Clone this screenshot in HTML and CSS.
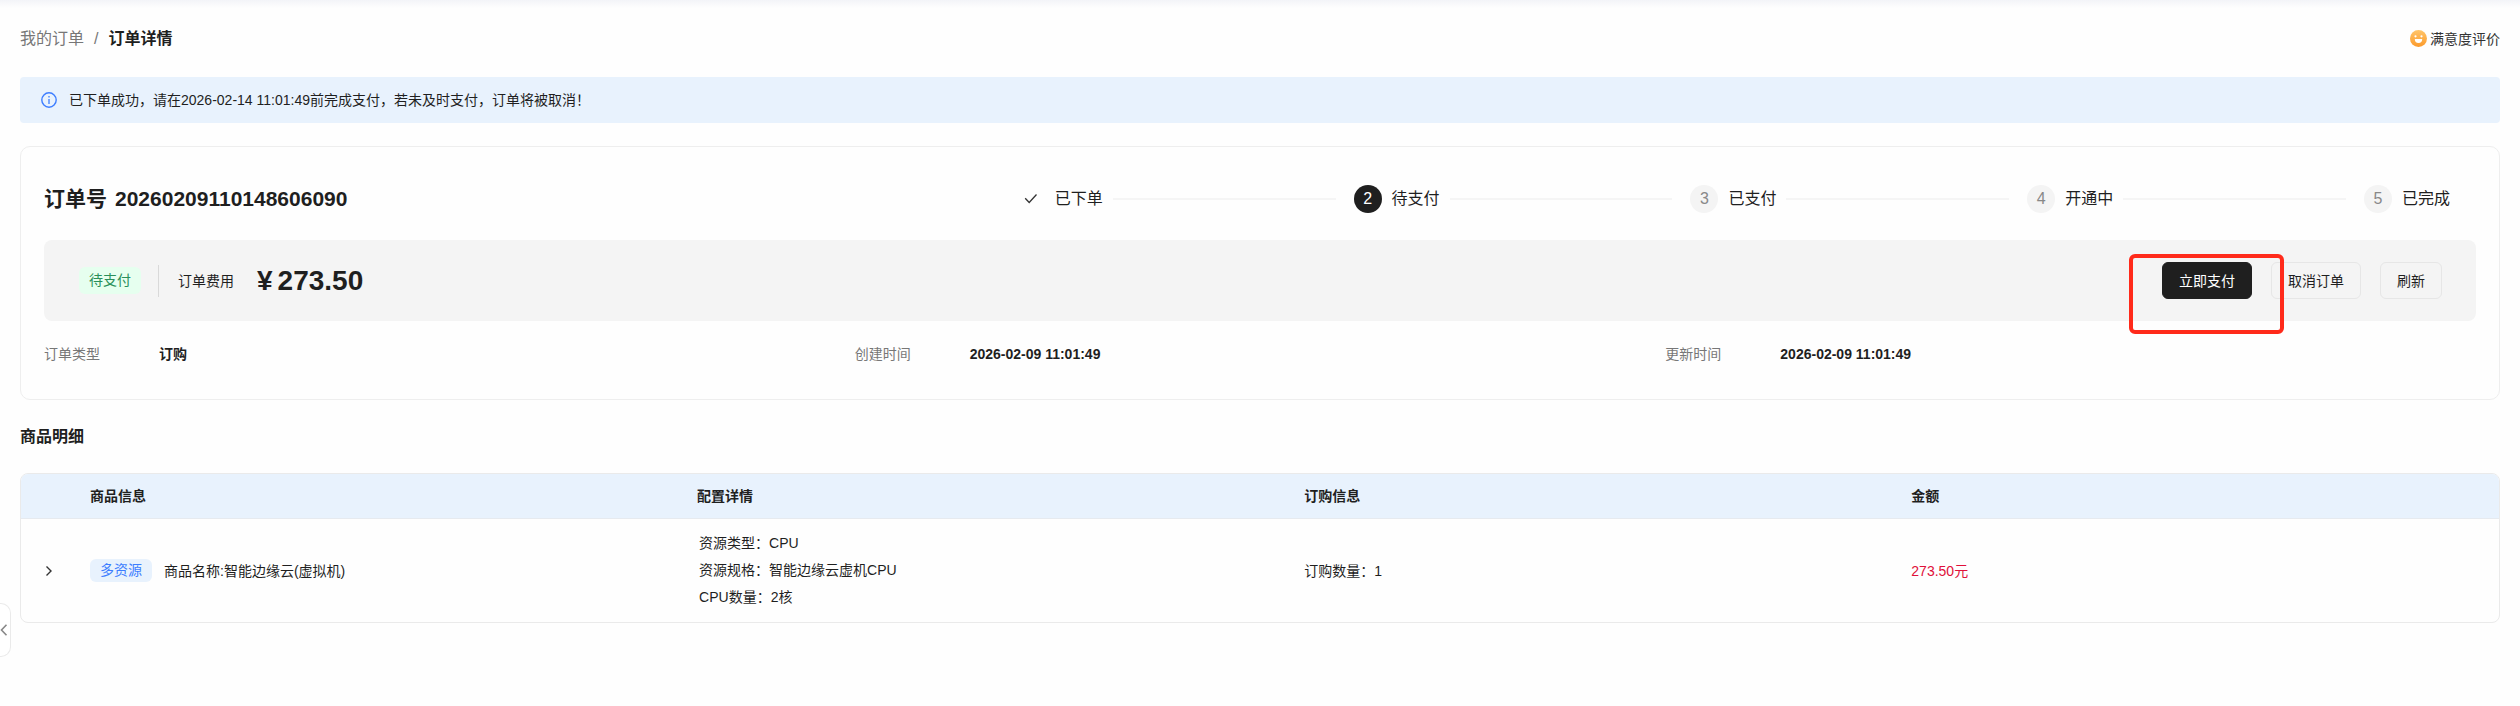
FILE: index.html
```
<!DOCTYPE html>
<html lang="zh-CN">
<head>
    <meta charset="UTF-8">
    <meta name="viewport" content="width=device-width, initial-scale=1.0">
    <title>订单详情</title>
    <link rel="stylesheet" href="styles.css">
</head>
<body>
    <header class="page-header">
        <nav class="breadcrumb">
            <a href="#">我的订单</a>
            <span class="separator">/</span>
            <span class="current">订单详情</span>
        </nav>
        <a href="#" class="feedback">
            <svg width="17" height="17" viewBox="0 0 17 17">
                <defs>
                    <linearGradient id="face" x1="0" y1="0" x2="0" y2="1">
                        <stop offset="0" stop-color="#ffc56a"/>
                        <stop offset="1" stop-color="#fc9a2b"/>
                    </linearGradient>
                </defs>
                <circle cx="8.5" cy="8.5" r="8.5" fill="url(#face)"/>
                <circle cx="5.5" cy="6.3" r="1.1" fill="#fff"/>
                <circle cx="11.5" cy="6.3" r="1.1" fill="#fff"/>
                <path d="M4.8 9h7.4a3.7 3.9 0 0 1-7.4 0z" fill="#fff"/>
            </svg>
            满意度评价
        </a>
    </header>

    <main>
        <div class="alert">
            <svg width="16" height="16" viewBox="0 0 16 16" fill="none" stroke="#3d7eff">
                <circle cx="8" cy="8" r="7.2" stroke-width="1.4"/>
                <path d="M8 7v5M8 4v1.4" stroke-width="1.3"/>
            </svg>
            <span>已下单成功，请在2026-02-14 11:01:49前完成支付，若未及时支付，订单将被取消！</span>
        </div>

        <section class="order-card">
            <div class="order-top">
                <h1>订单号<span>20260209110148606090</span></h1>
                <ol class="steps">
                    <li class="step">
                        <span class="step-icon done">
                            <svg width="14" height="12" viewBox="0 0 14 12" fill="none" stroke="#333" stroke-width="1.3">
                                <path d="M1.2 5.2l4 4.3 7.3-8"/>
                            </svg>
                        </span>
                        <span>已下单</span>
                    </li>
                    <li class="step">
                        <span class="step-icon active">2</span>
                        <span>待支付</span>
                    </li>
                    <li class="step">
                        <span class="step-icon">3</span>
                        <span>已支付</span>
                    </li>
                    <li class="step">
                        <span class="step-icon">4</span>
                        <span>开通中</span>
                    </li>
                    <li class="step">
                        <span class="step-icon">5</span>
                        <span>已完成</span>
                    </li>
                </ol>
            </div>

            <div class="pay-bar">
                <span class="status">待支付</span>
                <span class="fee-label">订单费用</span>
                <span class="fee"><span>¥</span>273.50</span>
                <div class="actions">
                    <div class="highlight">
                        <button type="button" class="primary">立即支付</button>
                    </div>
                    <button type="button">取消订单</button>
                    <button type="button">刷新</button>
                </div>
            </div>

            <dl class="order-info">
                <div>
                    <dt>订单类型</dt>
                    <dd>订购</dd>
                </div>
                <div>
                    <dt>创建时间</dt>
                    <dd>2026-02-09 11:01:49</dd>
                </div>
                <div>
                    <dt>更新时间</dt>
                    <dd>2026-02-09 11:01:49</dd>
                </div>
            </dl>
        </section>

        <h2>商品明细</h2>
        <table class="goods">
            <thead>
                <tr>
                    <th class="expand-col"></th>
                    <th class="info-col">商品信息</th>
                    <th class="info-col">配置详情</th>
                    <th class="info-col">订购信息</th>
                    <th>金额</th>
                </tr>
            </thead>
            <tbody>
                <tr>
                    <td class="expand-col">
                        <button type="button" class="expand" aria-label="展开">
                            <svg width="8" height="12" viewBox="0 0 8 12" fill="none" stroke="#333" stroke-width="1.4">
                                <path d="M1.5 1.5L6 6l-4.5 4.5"/>
                            </svg>
                        </button>
                    </td>
                    <td>
                        <div class="product">
                            <span class="tag">多资源</span>
                            <span>商品名称:智能边缘云(虚拟机)</span>
                        </div>
                    </td>
                    <td>
                        <ul class="config">
                            <li>资源类型：CPU</li>
                            <li>资源规格：智能边缘云虚机CPU</li>
                            <li>CPU数量：2核</li>
                        </ul>
                    </td>
                    <td>订购数量：1</td>
                    <td class="amount">273.50元</td>
                </tr>
            </tbody>
        </table>
    </main>

    <button type="button" class="drawer-handle" aria-label="收起">
        <svg width="8" height="12" viewBox="0 0 8 12" fill="none" stroke="#888" stroke-width="1.6">
            <path d="M6.5 0.8L1.5 6l5 5.2"/>
        </svg>
    </button>
</body>
</html>
```

FILE: styles.css
```
* {
    box-sizing: border-box;
}
body {
    margin: 0;
    padding: 0 20px 20px;
    font-family: "Liberation Sans", "Noto Sans CJK SC", sans-serif;
    font-size: 14px;
    line-height: 22px;
    color: #1f1f1f;
    background: linear-gradient(#f3f4f8, #fefefe 8px);
    background-color: #fefefe;
    background-repeat: no-repeat;
}
a {
    color: inherit;
    text-decoration: none;
}
h1, h2, ol, ul, dl, dd {
    margin: 0;
    padding: 0;
    list-style: none;
}
button {
    font: inherit;
    color: inherit;
    cursor: pointer;
}
.page-header {
    display: flex;
    justify-content: space-between;
    align-items: center;
    height: 77px;
}
.breadcrumb {
    display: flex;
    gap: 10px;
    font-size: 16px;
    color: #777;
}
.breadcrumb .current {
    font-weight: bold;
    color: #1f1f1f;
}
.feedback {
    display: flex;
    align-items: center;
    gap: 3px;
    color: #333;
}
.alert {
    display: flex;
    align-items: center;
    gap: 12px;
    height: 46px;
    padding: 0 21px;
    background-color: #e8f2fd;
    border-radius: 4px;
}
.order-card {
    margin-top: 23px;
    padding: 24px 23px 34px;
    border: 1px solid #eee;
    border-radius: 10px;
}
.order-top {
    display: flex;
    align-items: center;
    height: 56px;
    margin-bottom: 13px;
}
h1 {
    width: 40%;
    font-size: 21px;
}
h1 span {
    margin-left: 8px;
}
.steps {
    display: flex;
    flex: 1;
    gap: 18px;
    padding-right: 26px;
    font-size: 16px;
}
.step {
    display: flex;
    flex: 1;
    align-items: center;
    gap: 10px;
    white-space: nowrap;
}
.step:last-child {
    flex: none;
}
.step:not(:last-child)::after {
    content: "";
    flex: 1;
    height: 2px;
    background-color: #f5f5f5;
}
.step-icon {
    display: flex;
    align-items: center;
    justify-content: center;
    width: 28px;
    height: 28px;
    border-radius: 50%;
    color: #888;
    background-color: #f4f4f4;
}
.step-icon.active {
    color: #fff;
    background-color: #1f1f1f;
}
.step-icon.done {
    background: none;
}
.pay-bar {
    display: flex;
    align-items: center;
    height: 81px;
    padding: 0 34px 0 35px;
    background-color: #f4f4f4;
    border-radius: 8px;
}
.status {
    padding: 3px 10px;
    line-height: 21px;
    color: #2a8f5a;
    background-color: #e6ffef;
    border-radius: 6px;
}
.fee-label {
    margin-left: 17px;
    padding-left: 19px;
    line-height: 32px;
    border-left: 1px solid #d9d9d9;
}
.fee {
    display: flex;
    gap: 5px;
    margin-left: 23px;
    font-size: 28px;
    font-weight: bold;
}
.actions {
    display: flex;
    gap: 19px;
    margin-left: auto;
}
.actions button {
    height: 37px;
    padding: 0 16px;
    background: none;
    border: 1px solid #e6e6e6;
    border-radius: 6px;
}
.actions .primary {
    color: #fff;
    background-color: #1f1f1f;
    border-color: #1f1f1f;
}
.highlight {
    position: relative;
}
.highlight::after {
    content: "";
    position: absolute;
    top: -8px;
    right: -32px;
    bottom: -35px;
    left: -33px;
    border: 4px solid #ff2a1a;
    border-radius: 6px;
    pointer-events: none;
}
.order-info {
    display: grid;
    grid-template-columns: repeat(3, 1fr);
    margin-top: 22px;
}
.order-info div {
    display: flex;
}
.order-info dt {
    width: 115px;
    color: #777;
}
.order-info dd {
    font-weight: bold;
}
h2 {
    margin: 25px 0 24px;
    font-size: 16px;
    line-height: 24px;
}
.goods {
    width: 100%;
    table-layout: fixed;
    border: 1px solid #eaeaea;
    border-radius: 8px;
    border-spacing: 0;
    overflow: hidden;
}
.goods th {
    height: 45px;
    padding: 0;
    text-align: left;
    background-color: #e8f2fd;
    border-bottom: 1px solid #e6eaef;
}
.goods td {
    padding: 11px 0;
}
.goods .expand-col {
    width: 69px;
    padding-left: 24px;
}
.goods .info-col {
    width: 24.5%;
}
.expand {
    display: block;
    padding: 0;
    border: none;
    background: none;
}
.expand svg {
    display: block;
}
.product {
    display: flex;
    align-items: center;
    gap: 12px;
}
.tag {
    padding: 0 10px;
    line-height: 23px;
    color: #3d7eff;
    background-color: #e8f2fd;
    border-radius: 6px;
}
.config {
    padding-left: 2px;
    line-height: 27px;
}
.goods .amount {
    color: #e0103a;
}
.drawer-handle {
    position: fixed;
    top: 603px;
    left: 0;
    width: 11px;
    height: 54px;
    padding: 0;
    background-color: #fff;
    border: 1px solid #eaeaea;
    border-left: none;
    border-radius: 0 10px 10px 0;
}
.drawer-handle svg {
    display: block;
}
```
